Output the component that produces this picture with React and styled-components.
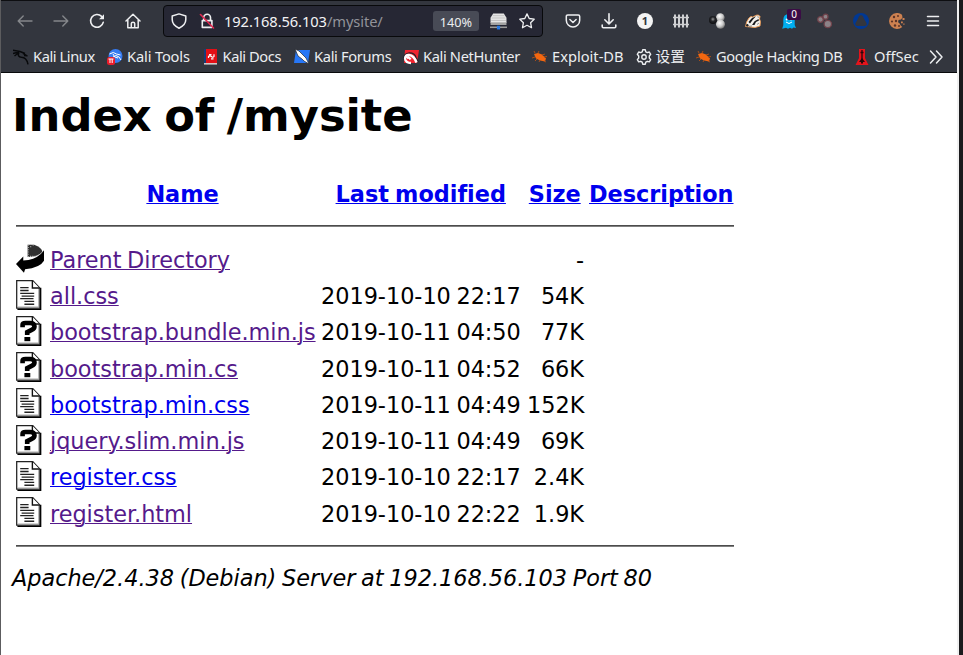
import React from "react";
import styled, { createGlobalStyle } from "styled-components";

const Global = createGlobalStyle`
  * { box-sizing: border-box; }
  body { margin: 0; background: #fff; overflow: hidden; }
`;

const Desktop = styled.div`
  display: flex;
  height: 655px;
  background: #1b1b1d;
  padding-right: 4px;
`;
const Window = styled.div`
  flex: 1;
  display: flex;
  flex-direction: column;
  min-width: 0;
  border-left: 1px solid #5c5c5e;
  border-right: 2px solid #f0f0f0;
  background: #fff;
`;
const Chrome = styled.header`
  height: 73px;
  background: #33363e;
  border-top: 1px solid #0d0e11;
  border-bottom: 1px solid #08090b;
  font-family: "Noto Sans", "Noto Sans CJK SC", sans-serif;
  color: #eceef0;
`;
const Toolbar = styled.div`
  display: flex;
  align-items: center;
  height: 40px;
`;
const NavGroup = styled.nav`
  display: flex;
  width: 162px;
  padding-left: 6px;
`;
const ToolButton = styled.button`
  flex: 0 0 ${(p) => p.$w || 36}px;
  height: 32px;
  padding: 0;
  border: 0;
  background: none;
  color: ${(p) => (p.$dim ? "#85878b" : "#eeeff1")};
  display: flex;
  align-items: center;
  justify-content: center;
  position: relative;
`;
const AddressBar = styled.div`
  display: flex;
  align-items: center;
  width: 380px;
  height: 32px;
  padding-left: 6px;
  border: 1px solid #08090b;
  border-radius: 4px;
  background: #262734;
`;
const Address = styled.div`
  flex: 1;
  margin-left: -2px;
  font-size: 14.67px;
  letter-spacing: -0.08px;
  line-height: 30px;
  color: #f3f3f5;
  span { color: #92939a; }
`;
const ZoomLevel = styled.div`
  width: 46px;
  height: 20px;
  border-radius: 3px;
  background: #484b56;
  font-size: 12.7px;
  line-height: 22px;
  text-align: center;
  margin-right: 5px;
`;
const Extensions = styled.div`
  display: flex;
  margin-left: 12px;
`;
const Badge = styled.span`
  position: absolute;
  left: 16px;
  top: 4px;
  width: 14px;
  height: 11px;
  border-radius: 2px;
  background: #3b0c45;
  color: #fff;
  font: 10px/11px "Noto Sans", sans-serif;
`;
const Bookmarks = styled.div`
  display: flex;
  align-items: center;
  height: 31px;
  padding-left: 12px;
`;
const Bookmark = styled.div`
  flex: 0 0 ${(p) => p.$w}px;
  display: flex;
  align-items: center;
  gap: 4px;
  font-size: 14.67px;
  line-height: 20px;
  letter-spacing: ${(p) => p.$tracking}px;
  white-space: nowrap;
  svg { flex: none; }
`;
const BookmarkLabel = styled.span`
  margin-bottom: 2px;
`;

const Page = styled.main`
  flex: 1;
  padding: 0 15px 0 11px;
  font-family: "DejaVu Sans", sans-serif;
  font-size: 22.4px;
  letter-spacing: -0.03px;
  word-spacing: -1.5px;
  color: #000;
`;
const Title = styled.h1`
  margin: 0;
  padding-top: 16px;
  font-size: 44.8px;
  line-height: 53px;
  letter-spacing: -0.06px;
  word-spacing: -3px;
`;
const Listing = styled.section`
  width: 718px;
  margin: 34px 0 0 4px;
`;
const Row = styled.div`
  display: grid;
  grid-template-columns: 28px 265px 200px 57px 144px;
  column-gap: 6px;
  height: 36.25px;
  line-height: 36px;
  white-space: nowrap;
  svg { display: block; margin-top: ${(p) => (p.$parent ? 2.5 : 1.5)}px; }
`;
const HeadRow = styled(Row)`
  grid-template-columns: 28px 265px 199.5px 56.5px 144px;
  font-weight: bold;
  text-align: center;
`;
const Link = styled.a`
  color: ${(p) => (p.$visited ? "#551a8b" : "#0000ee")};
  text-decoration: underline;
  text-decoration-thickness: 1px;
`;
const Size = styled.span`
  text-align: right;
`;
const Rule = styled.hr`
  height: 2px;
  margin: ${(p) => p.$m};
  border: 0;
  border-top: 1px solid #4c4c4c;
  border-bottom: 1px solid #808080;
`;
const Signature = styled.address`
  line-height: 28px;
  word-spacing: -1.3px;
`;

const Line = ({ children, s = 16, sw = 1.4 }) => (
  <svg width={s} height={s} viewBox="0 0 16 16" fill="none" stroke="currentColor" strokeWidth={sw} strokeLinecap="round" strokeLinejoin="round">
    {children}
  </svg>
);
const Art = ({ children, s = 16 }) => (
  <svg width={s} height={s} viewBox="0 0 16 16">{children}</svg>
);

const Back = () => <Line><path d="M15 8H1.4M6.2 3 1.2 8l5 5" /></Line>;
const Forward = () => <Line><path d="M1 8h13.6M9.8 3l5 5-5 5" /></Line>;
const Reload = () => (
  <Line sw={1.6}>
    <path d="M14.3 9.2A6.4 6.4 0 1 1 12.6 3.4" />
    <path d="M15 1.3v5h-5z" fill="currentColor" stroke="none" />
  </Line>
);
const Home = () => (
  <Line sw={1.5}>
    <path d="M1 8 8 1.3 15 8M2.8 6.8v8h10.4v-8M6.3 14.5v-4q0-1.3 1.7-1.3t1.7 1.3v4" />
  </Line>
);
const Shield = () => <Line sw={1.5}><path d="M8 .9 14.8 3v3.6c0 4-2.4 6.6-6.8 8.6C3.6 13.2 1.2 10.6 1.2 6.6V3z" /></Line>;
const LockOff = () => (
  <Line sw={1.6}>
    <path d="M3.3 7.6h9.6v6.8H3.3zM4.7 7.4V4.6a3.4 3.4 0 0 1 6.8 0v2.8" />
    <path d="M1.5 1.5 14.5 15" stroke="#e22850" />
  </Line>
);
const Drive = () => (
  <Art s={17}>
    <path d="M3 .5h10l2.500 4v5h-15v-5z" fill="#e6e6e6" />
    <path d="M2.500 2.500h11M1.500 4.700h13M1 7h14" stroke="#bdbdbd" strokeWidth=".8" />
    <path d="M.5 8.800h15v2.500H.5z" fill="#a2a2a2" />
    <path d="M0 12.700h16v1.500H0z" fill="#999" />
    <path d="M6.500 12h3v3.500h-3z" fill="#2878e0" />
  </Art>
);
const Star = () => <Line sw={1.3}><path d="m8 .9 2.200 4.600 5 .7-3.600 3.500.9 5L8 12.300l-4.500 2.400.9-5L.8 6.200l5-.7z" /></Line>;
const Pocket = () => <Line sw={1.5}><path d="M2.800 2h10.400q1.500 0 1.500 1.500v3.800a6.700 6.700 0 0 1-13.400 0V3.500Q1.300 2 2.800 2zM4.900 6.500 8 9.500l3.100-3" /></Line>;
const Download = () => <Line sw={1.6}><path d="M8 .8v10M3.800 6.800 8 11l4.200-4.200M1.200 12v1.600q0 1.200 1.200 1.200h11.200q1.200 0 1.200-1.200V12" /></Line>;
const CircleOne = () => (
  <Art>
    <circle cx="8" cy="8" r="8" fill="#f4f4f4" />
    <text x="8" y="12" fontSize="11" fontWeight="bold" textAnchor="middle" fill="#33363e" fontFamily="Noto Sans">1</text>
  </Art>
);
const Fence = () => (
  <Art>
    <path d="M2 1.500v13M6 1.500v13M10 1.500v13M14 1.500v13" stroke="#cfd0d2" strokeWidth="2" />
    <path d="M0 4.500h16M0 11.500h16" stroke="#cfd0d2" strokeWidth="1.300" />
  </Art>
);
const Spheres = () => (
  <Art>
    <defs>
      <radialGradient id="ball" cx=".4" cy=".35" r=".7"><stop offset="0" stopColor="#fff" /><stop offset=".55" stopColor="#c9c9c9" /><stop offset="1" stopColor="#666" /></radialGradient>
      <radialGradient id="darkBall" cx=".5" cy=".4" r=".6"><stop offset="0" stopColor="#999" /><stop offset=".45" stopColor="#25262a" /><stop offset="1" stopColor="#0c0c0e" /></radialGradient>
    </defs>
    <circle cx="11.300" cy="4.500" r="4.300" fill="url(#ball)" />
    <circle cx="11.500" cy="11.300" r="4.500" fill="url(#ball)" />
    <circle cx="3.900" cy="7" r="3.900" fill="url(#darkBall)" />
  </Art>
);
const Badger = () => (
  <Art>
    <path d="m.6 13.500 1-4.500 2.400-4 2-1.500 1.500.5L11.500 2.200 13.500 2l1.500 1.500-.5 2.500 1 2.500-.5 4.500-5 1.500z" fill="#f3f0eb" stroke="#ef9b52" strokeWidth=".9" />
    <path d="m3.500 9 3.500-4 4-1.800-3 3.300-3 4zM7 12l2.500-3.700L13.500 6l.5 1.500-3 1.500-1.500 3zM12.500 3.300l1.300.7-.8.800z" fill="#18191c" />
    <circle cx="2.300" cy="12.300" r="1.200" fill="#222" />
    <path d="m4 13.300 3-.300M12 11.500l2-1.500" stroke="#777" strokeWidth=".8" />
  </Art>
);
const Ghost = () => (
  <Art>
    <path d="M2.300 12V7Q2.300 1 8 1t5.700 6v5l1.300 3-2.500-.5-1.500 1.300-2-1-2 1-2-1-3.800 1z" fill="#00aef0" />
    <circle cx="5.700" cy="6.500" r="1" fill="#fff" /><circle cx="10" cy="6.500" r="1" fill="#fff" />
    <path d="M5 9q3 3 6 0" stroke="#fff" fill="none" />
  </Art>
);
const Molecules = () => (
  <Art>
    <g fill="#8c8388" stroke="#70434b" strokeWidth="1.300">
      <circle cx="3.500" cy="6.500" r="2.800" /><circle cx="8.500" cy="3.700" r="2.500" /><circle cx="10.800" cy="11" r="3.700" />
    </g>
  </Art>
);
const BlueRing = () => (
  <Art>
    <circle cx="8" cy="8" r="8" fill="#003894" />
    <path d="M8 2.300c2 0 2.300 1.800 3 3.500l2.500 4.200c.8 2-.5 3-2 3h-7c-1.500 0-2.800-1-2-3L5 5.800c.7-1.700 1-3.500 3-3.500z" fill="#33363e" />
  </Art>
);
const Cookie = () => (
  <Art>
    <path d="M13 1.700A8 8 0 1 0 13.300 14l-1.800-1.800-1-2-1.500-1 .5-2.200 2.500-.5 1.500-2z" fill="#cd8150" />
    <g fill="#5c3427"><circle cx="5" cy="4" r="1.200" /><circle cx="9" cy="3" r="1" /><circle cx="3" cy="8.500" r="1.100" /><circle cx="7" cy="8" r="1.200" /><circle cx="6" cy="12.500" r="1.200" /><circle cx="10" cy="13" r="1" /></g>
    <path d="M13.500 5h2v2h-2zM12 8.500h1.800v1.800H12zM14.300 10.500h1.200v1.200h-1.200z" fill="#cd8150" />
  </Art>
);
const Menu = () => <Line sw={1.5}><path d="M2.500 3.500h11M2.500 8h11M2.500 12.500h11" /></Line>;

const Kali = () => (
  <Art>
    <path d="M0 1.300 7 2.500l5 2M0 4.500 6 3M1.500 7 6 3.500M6 3.500Q4 8 8.500 8.300q5 0 6.500 7M10 4.300l4 2.500-3-.3" stroke="#08090b" strokeWidth="1.500" fill="none" strokeLinejoin="round" />
  </Art>
);
const Tools = () => (
  <Art>
    <circle cx="8.500" cy="7" r="7" fill="#367bf0" />
    <path d="M2.500 5q4-3 7 0l4 1M6 8q3-3 6 0l2 3M6 5q1 4 5 4" stroke="#fff" fill="none" />
    <rect y="8" width="8" height="8" rx="2.500" fill="#ec1c2b" />
    <path d="M1.500 10h5M3 10v4M5.200 10v4" stroke="#fff" />
  </Art>
);
const Docs = () => (
  <Art>
    <path d="M1 0h3v15H1z" fill="#173c79" /><path d="M3 0h11v14H3z" fill="#e30f16" /><path d="M1 14h13v1.600H1z" fill="#cfcaca" />
    <path d="M11 5.200v2.300q-1 1.500-2.500 0t-3 0v1.500M6 5.500h2.500M8 9.800h2.500" fill="none" stroke="#fff" strokeWidth="1.200" />
  </Art>
);
const Forums = () => (
  <Art>
    <path d="M2 1h14l-2 13H0z" fill="#2777f7" />
    <path d="m1 0 4 2 5 5 2 2 3 6-5-3-2-2-4-3z" fill="#fff" stroke="#22262d" strokeWidth=".7" />
  </Art>
);
const Hunter = () => (
  <Art>
    <path d="M2 1h14l-2 13H1z" fill="#f02530" />
    <path d="M.8 10.500Q0 5 5.500 4q6-.5 7.500 4.500l2.500 4.500" stroke="#25242a" strokeWidth="1.200" fill="none" />
    <path d="M2 10Q2 6 6 6q5 .5 7.500 7.500M2 10q1 4 6 4M4 9.500q2-2 3.500 1" stroke="#fff" strokeWidth="2.300" fill="none" />
  </Art>
);
const Bug = () => (
  <Art>
    <path d="m2 5 4-1 4 1.500 4 4-1 3-5-1-4-2z" fill="#f36710" />
    <path d="m3 4-1-2M6 4l1-2M10 6l3-1M12 8l3-.500M3 8l-3 1M5 10l-2 2M8 11l-1 2M12 12l2 1" stroke="#a84e1a" />
  </Art>
);
const Gear = () => (
  <Line sw={1.4}>
    <path d="M6.700.8h2.600l.5 2 1.500.8 2-.6 1.400 2.300L13.300 7v2l1.400 1.600-1.400 2.300-2-.6-1.500.9-.5 2H6.700l-.5-2-1.500-.9-2 .6-1.400-2.300L2.700 9V7L1.300 5.300 2.700 3l2 .6 1.500-.8z" />
    <circle cx="8" cy="8" r="2.200" />
  </Line>
);
const Off = () => (
  <Art>
    <path d="M5 0h6v9l3.500 7h-13L5 9z" fill="#e4131b" />
    <path d="M8 1v10M6.500 3.500h3" stroke="#27070b" strokeWidth="1.300" />
    <path d="m8 9-3 4h2v1.500h2V13h2z" fill="#27070b" />
  </Art>
);
const Chevrons = () => <Line sw={1.5}><path d="m2.500 2 5.500 6-5.500 6M8.500 2 14 8l-5.500 6" /></Line>;

const PageSheet = ({ children }) => (
  <svg width="28" height="30.8" viewBox="0 0 20 22">
    <path d="M1 20.900h16.500V5.500" fill="none" stroke="#000" strokeWidth="1.200" />
    <path d="M.5.500h11.500l4.800 5v14.500H.500z" fill="#fff" stroke="#222" strokeWidth=".9" />
    <path d="M16.300 6v13.400H1" fill="none" stroke="#aaa" strokeWidth=".8" />
    <path d="M11.700.500v5.200h5" fill="#fff" stroke="#111" strokeWidth="1" />
    {children}
  </svg>
);
const TextFile = () => (
  <PageSheet>
    <path d="M3 5.500h6M3 7.500h6M3 9.500h10M4 11.500h9M3 13.300h9.500M6 15.300h7M6 17.300h7" stroke="#222" strokeWidth=".95" />
  </PageSheet>
);
const UnknownFile = () => (
  <PageSheet>
    <path d="M4.700 8V6.300Q4.700 5 6.800 5H10q3.200 0 3.200 2.500 0 1.500-2 2.400L8 11.500v2" fill="none" stroke="#000" strokeWidth="3.300" />
    <path d="M6 15h4.200v3H6z" />
  </PageSheet>
);
const ParentDir = () => (
  <svg width="28" height="30.8" viewBox="0 0 20 22">
    <path d="M8.300.5H13Q18.500 2.700 18.800 5.500 16 9.300 8.300 9.300z" fill="#303030" />
    <path d="M8.700.5v9M10.500 0v2.500M12.300.300v1.500M10 8.800h5" stroke="#bbb" strokeWidth=".8" strokeDasharray=".8 .8" />
    <path d="M20 4.500V12q-3 5.200-13.500 6l-.8 2.500L0 14.300 5.200 9v2.800Q14.500 11.500 19.300 5.300z" fill="#000" />
  </svg>
);

const bookmarks = [
  ["Kali Linux", 94, Kali, -0.42],
  ["Kali Tools", 95.5, Tools, -0.15],
  ["Kali Docs", 91.5, Docs, -0.42],
  ["Kali Forums", 109, Forums, -0.33],
  ["Kali NetHunter", 129, Hunter, -0.36],
  ["Exploit-DB", 103.5, Bug, 0],
  ["设置", 60.5, Gear, 0],
  ["Google Hacking DB", 158, Bug, -0.4],
  ["OffSec", 74, Off, 0],
];
const extensions = [Pocket, Download, CircleOne, Fence, Spheres, Badger, Ghost, Molecules, BlueRing, Cookie, Menu];
const files = [
  ["Parent Directory", "", "-", true, ParentDir],
  ["all.css", "2019-10-10 22:17", "54K", true, TextFile],
  ["bootstrap.bundle.min.js", "2019-10-11 04:50", "77K", true, UnknownFile],
  ["bootstrap.min.cs", "2019-10-11 04:52", "66K", true, UnknownFile],
  ["bootstrap.min.css", "2019-10-11 04:49", "152K", false, TextFile],
  ["jquery.slim.min.js", "2019-10-11 04:49", "69K", true, UnknownFile],
  ["register.css", "2019-10-10 22:17", "2.4K", false, TextFile],
  ["register.html", "2019-10-10 22:22", "1.9K", true, TextFile],
];

export default function App() {
  return (
    <Desktop>
      <Global />
      <Window>
        <Chrome>
          <Toolbar>
            <NavGroup>
              <ToolButton $dim><Back /></ToolButton>
              <ToolButton $dim><Forward /></ToolButton>
              <ToolButton><Reload /></ToolButton>
              <ToolButton><Home /></ToolButton>
            </NavGroup>
            <AddressBar>
              <ToolButton $w={18}><Shield /></ToolButton>
              <ToolButton $w={38}><LockOff /></ToolButton>
              <Address>192.168.56.103<span>/mysite/</span></Address>
              <ZoomLevel>140%</ZoomLevel>
              <ToolButton $w={28}><Drive /></ToolButton>
              <ToolButton $w={30}><Star /></ToolButton>
            </AddressBar>
            <Extensions>
              {extensions.map((Icon, i) => (
                <ToolButton key={i}>
                  <Icon />
                  {Icon === Ghost && <Badge>0</Badge>}
                </ToolButton>
              ))}
            </Extensions>
          </Toolbar>
          <Bookmarks>
            {bookmarks.map(([label, w, Icon, tracking]) => (
              <Bookmark key={label} $w={w} $tracking={tracking}>
                <Icon />
                <BookmarkLabel>{label}</BookmarkLabel>
              </Bookmark>
            ))}
            <Chevrons />
          </Bookmarks>
        </Chrome>
        <Page>
          <Title>Index of /mysite</Title>
          <Listing>
            <HeadRow>
              <span />
              <span><Link>Name</Link></span>
              <span><Link>Last modified</Link></span>
              <span><Link>Size</Link></span>
              <span><Link>Description</Link></span>
            </HeadRow>
            <Rule $m="13px 0 14.5px" />
            {files.map(([name, date, size, visited, Icon]) => (
              <Row key={name} $parent={Icon === ParentDir}>
                <Icon />
                <span><Link $visited={visited}>{name}</Link></span>
                <span>{date}</span>
                <Size>{size}</Size>
              </Row>
            ))}
            <Rule $m="13.5px 0 17px" />
          </Listing>
          <Signature>Apache/2.4.38 (Debian) Server at 192.168.56.103 Port 80</Signature>
        </Page>
      </Window>
    </Desktop>
  );
}
